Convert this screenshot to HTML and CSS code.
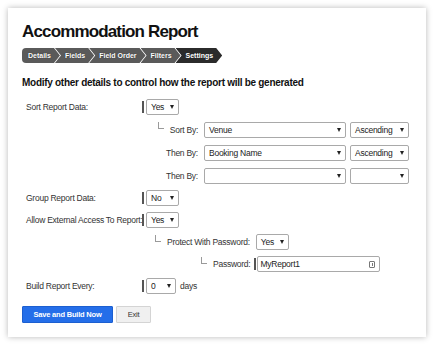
FILE: index.html
```html
<!DOCTYPE html>
<html lang="en">
<head>
  <meta charset="UTF-8">
  <meta name="viewport" content="width=device-width, initial-scale=1.0">
  <title>Accommodation Report</title>
  <link rel="stylesheet" href="styles.css">
</head>
<body>
  <div class="card">
    <h1 class="title">Accommodation Report</h1>
    <div class="crumbs">
      <span class="crumb first">Details</span>
      <span class="crumb">Fields</span>
      <span class="crumb">Field Order</span>
      <span class="crumb">Filters</span>
      <span class="crumb current">Settings</span>
    </div>
    <h2 class="intro">Modify other details to control how the report will be generated</h2>
    <div class="form">
      <div class="row">
        <span class="label">Sort Report Data:</span>
        <span class="mark"></span>
        <span class="select small">Yes</span>
      </div>
      <div class="sub-row">
        <span class="sub-label"><span class="branch"></span>Sort By:</span>
        <span class="select field">Venue</span>
        <span class="select order">Ascending</span>
      </div>
      <div class="sub-row">
        <span class="sub-label">Then By:</span>
        <span class="select field">Booking Name</span>
        <span class="select order">Ascending</span>
      </div>
      <div class="sub-row">
        <span class="sub-label">Then By:</span>
        <span class="select field"></span>
        <span class="select order"></span>
      </div>
      <div class="row">
        <span class="label">Group Report Data:</span>
        <span class="mark"></span>
        <span class="select small">No</span>
      </div>
      <div class="row">
        <span class="label">Allow External Access To Report:</span>
        <span class="mark"></span>
        <span class="select small">Yes</span>
      </div>
      <div class="row">
        <span class="indent-1"></span>
        <span class="branch"></span>
        <span class="inline-label">Protect With Password:</span>
        <span class="select small">Yes</span>
      </div>
      <div class="row">
        <span class="indent-2"></span>
        <span class="branch"></span>
        <span class="inline-label tight">Password:</span>
        <span class="mark"></span>
        <span class="text-input">MyReport1<span class="key-icon"></span></span>
      </div>
      <div class="row">
        <span class="label">Build Report Every:</span>
        <span class="mark"></span>
        <span class="select tiny">0</span>
        <span class="unit">days</span>
      </div>
    </div>
    <div class="actions">
      <button class="btn primary">Save and Build Now</button>
      <button class="btn">Exit</button>
    </div>
  </div>
</body>
</html>
```

FILE: styles.css
```css
body, html {
  padding: 0;
  margin: 0;
}
body {
  background-color: #fff;
  padding: 8px;
  font-family: "Liberation Sans", Arial, sans-serif;
}
.card {
  background-color: #fff;
  box-shadow: 0 0 6px rgba(0, 0, 0, 0.28);
  padding: 14px 14px 14px;
  color: #333;
}
.title {
  margin: 0;
  font-size: 17px;
  line-height: 20px;
  letter-spacing: -0.85px;
  font-weight: bold;
  color: #111;
}

.crumbs {
  display: flex;
  margin-top: 6px;
  height: 15px;
}
.crumb {
  height: 15px;
  line-height: 15px;
  font-size: 7px;
  font-weight: bold;
  color: #fff;
  text-shadow: 0 0 1px #222;
  background-color: #5a5a5a;
  padding: 0 9px 0 10px;
  margin-left: -5px;
  white-space: nowrap;
  clip-path: polygon(0 0, calc(100% - 6px) 0, 100% 50%, calc(100% - 6px) 100%, 0 100%, 6px 50%);
}
.crumb.first {
  margin-left: 0;
  padding-left: 6px;
  border-radius: 4px 0 0 4px;
  clip-path: polygon(0 0, calc(100% - 6px) 0, 100% 50%, calc(100% - 6px) 100%, 0 100%);
}
.crumb.current {
  background-color: #2b2b2b;
}

.intro {
  margin: 14px 0 0;
  font-size: 10px;
  line-height: 12px;
  letter-spacing: -0.28px;
  font-weight: bold;
  color: #111;
}

.form {
  margin-top: 7px;
  padding-left: 4px;
  font-size: 8.5px;
  letter-spacing: -0.25px;
}
.row {
  display: flex;
  align-items: center;
  height: 22px;
}
.sub-row {
  display: flex;
  align-items: center;
  height: 23px;
}
.label {
  width: 116px;
  flex: none;
  white-space: nowrap;
}
.sub-label {
  width: 172px;
  flex: none;
  margin-right: 6px;
  display: flex;
  align-items: center;
  justify-content: flex-end;
}
.inline-label {
  margin-right: 6px;
  white-space: nowrap;
}
.inline-label.tight {
  margin-right: 4px;
}
.indent-1 {
  width: 129px;
  flex: none;
}
.indent-2 {
  width: 175px;
  flex: none;
}
.branch {
  width: 5px;
  height: 6px;
  border-left: 1px solid #9a9a9a;
  border-bottom: 1px solid #9a9a9a;
  margin-right: 6px;
  margin-bottom: 8px;
  flex: none;
}

.mark {
  width: 2px;
  height: 12px;
  background-color: #555;
  margin-right: 2px;
  flex: none;
}
.row .inline-label + .mark {
  margin-right: 1px;
}

.select {
  display: flex;
  align-items: center;
  justify-content: space-between;
  box-sizing: border-box;
  height: 16px;
  padding: 0 4px 0 4px;
  background-color: #fff;
  border: 1px solid #a9a9a9;
  border-radius: 2px;
  color: #222;
  flex: none;
  white-space: nowrap;
}
.select::after {
  content: "";
  margin-left: auto;
  border-top: 4px solid #222;
  border-left: 2.5px solid transparent;
  border-right: 2.5px solid transparent;
}
.select.small {
  width: 33px;
}
.select.tiny {
  width: 30px;
}
.select.field {
  width: 142px;
  margin-right: 4px;
}
.select.order {
  width: 59px;
}

.text-input {
  display: flex;
  align-items: center;
  box-sizing: border-box;
  width: 123px;
  height: 16px;
  padding: 0 4px 0 2px;
  border: 1px solid #a9a9a9;
  border-radius: 2px;
  color: #222;
}
.key-icon {
  margin-left: auto;
  width: 4px;
  height: 5px;
  border: 1px solid #777;
  border-radius: 1px;
  position: relative;
}
.key-icon::after {
  content: "";
  position: absolute;
  left: 1.5px;
  top: 1px;
  width: 1px;
  height: 3px;
  background-color: #777;
}
.unit {
  margin-left: 4px;
}

.actions {
  display: flex;
  gap: 3px;
  margin-top: 9px;
}
.btn {
  height: 17px;
  padding: 0;
  font-family: "Liberation Sans", Arial, sans-serif;
  font-size: 7.5px;
  letter-spacing: -0.2px;
  color: #333;
  background-color: #f0f0f0;
  border: 1px solid #d4d4d4;
  border-radius: 1px;
  width: 35px;
}
.btn.primary {
  width: 91px;
  color: #fff;
  font-weight: bold;
  background-color: #246ee9;
  border-color: #1c5fd0;
}
```
